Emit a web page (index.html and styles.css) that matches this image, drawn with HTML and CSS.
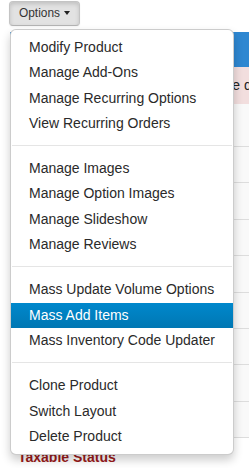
FILE: index.html
```html
<!DOCTYPE html>
<html>
<head>
<meta charset="utf-8">
<link rel="stylesheet" href="styles.css">
</head>
<body>
<div class="page">
  <div class="toolbar">
    <div class="btn-group">
      <button class="btn">Options <span class="caret"></span></button>
      <ul class="dropdown-menu">
        <li><a>Modify Product</a></li>
        <li><a>Manage Add-Ons</a></li>
        <li><a>Manage Recurring Options</a></li>
        <li><a>View Recurring Orders</a></li>
        <li class="divider"></li>
        <li><a>Manage Images</a></li>
        <li><a>Manage Option Images</a></li>
        <li><a>Manage Slideshow</a></li>
        <li><a>Manage Reviews</a></li>
        <li class="divider"></li>
        <li><a>Mass Update Volume Options</a></li>
        <li class="active"><a>Mass Add Items</a></li>
        <li><a>Mass Inventory Code Updater</a></li>
        <li class="divider"></li>
        <li><a>Clone Product</a></li>
        <li><a>Switch Layout</a></li>
        <li><a>Delete Product</a></li>
      </ul>
    </div>
  </div>
  <div class="grid">
    <div class="head"></div>
    <div class="alert">This product is hidden. Please see details.</div>
    <div class="row tall"></div>
    <div class="row"></div>
    <div class="row"></div>
    <div class="row"></div>
    <div class="row"></div>
    <div class="row"></div>
    <div class="row"></div>
    <div class="row"></div>
    <div class="row"></div>
    <div class="row label-row"><span class="label">Taxable Status</span></div>
  </div>
</div>
</body>
</html>
```

FILE: styles.css
```css
html, body {
  margin: 0;
  padding: 0;
  overflow: hidden;
  background: #fff;
  font-family: "Liberation Sans", Arial, sans-serif;
  color: #333;
}

.page {
  padding: 1px 0 0 9px;
}

.toolbar {
  height: 25px;
}

.btn-group {
  position: relative;
  display: inline-block;
}

.btn {
  display: inline-block;
  margin: 0;
  padding: 2px 9px;
  height: 25px;
  font-family: "Liberation Sans", Arial, sans-serif;
  font-size: 11.9px;
  line-height: 19px;
  color: #333;
  background: #e2e2e2;
  border: 1px solid #c4c4c4;
  border-bottom-color: #b3b3b3;
  border-radius: 4px;
  box-shadow: inset 0 2px 4px rgba(0, 0, 0, 0.15), 0 1px 2px rgba(0, 0, 0, 0.05);
}

.caret {
  display: inline-block;
  width: 0;
  height: 0;
  margin-left: 1px;
  vertical-align: 2px;
  border-top: 4px solid #222;
  border-left: 3.5px solid transparent;
  border-right: 3.5px solid transparent;
}

.dropdown-menu {
  position: absolute;
  z-index: 10;
  top: 28px;
  left: 1px;
  width: 222px;
  margin: 0;
  padding: 5px 0;
  list-style: none;
  background: #fff;
  border: 1px solid rgba(0, 0, 0, 0.2);
  border-radius: 6px;
  box-shadow: 0 5px 10px rgba(0, 0, 0, 0.2);
}

.dropdown-menu li a {
  display: block;
  padding: 3px 18px;
  font-size: 14px;
  line-height: 19.3px;
  color: #2a2a2a;
  white-space: nowrap;
}

.dropdown-menu li.active a {
  color: #fff;
  background: linear-gradient(#0088cc, #0077b3);
}

.dropdown-menu .divider {
  height: 1px;
  margin: 9px 1px;
  background: #e5e5e5;
  border-bottom: 1px solid #fff;
}

.grid {
  margin: 6px 0 0 1px;
  width: 700px;
  font-size: 14px;
}

.head {
  height: 35px;
  background: #2e87d1;
}

.alert {
  height: 37px;
  line-height: 37px;
  padding-left: 16px;
  background: #f2dede;
  color: #222;
}

.row {
  height: 36.4px;
  box-sizing: border-box;
  border-top: 1px solid #dddddd;
  background: #f9f9f9;
}

.row.tall {
  height: 42px;
  border-top: 0;
}

.label-row {
  padding: 9px 0 0 8px;
  background: #fff;
}

.label {
  font-weight: bold;
  color: #9a1b1b;
  line-height: 20px;
}
```
